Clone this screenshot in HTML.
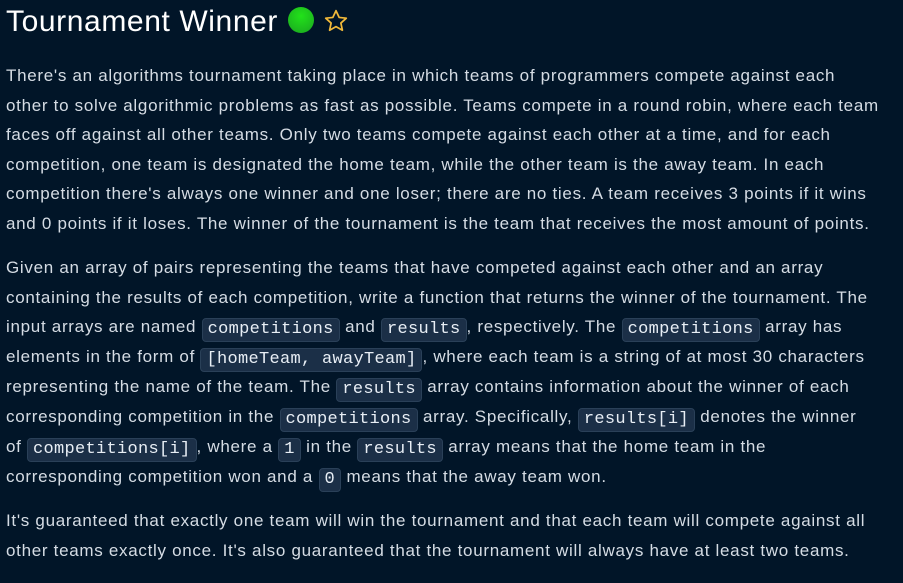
<!DOCTYPE html>
<html><head><meta charset="utf-8"><style>
html,body{margin:0;padding:0;background:#011528;width:903px;height:583px;overflow:hidden}
body{font-family:"Liberation Sans",sans-serif;color:#d5dce4}
h1{position:absolute;left:6px;top:5px;margin:0;font-weight:normal;font-size:30px;color:#fff;white-space:nowrap;letter-spacing:0.6px}
.dot{display:inline-block;width:26px;height:26px;border-radius:50%;background:radial-gradient(circle at 50% 35%,#22e21a,#1aa520);vertical-align:-2px;margin-left:10px}
.star{display:inline-block;vertical-align:-3px;margin-left:9px}
p{position:absolute;left:6px;margin:0;font-size:17px;line-height:29.6px;white-space:nowrap;letter-spacing:0.7px}
code{display:inline-block;line-height:22px;height:22px;vertical-align:-1px;font-family:"Liberation Mono",monospace;font-size:17px;background:#1b2f47;border:1px solid #2a4058;border-radius:4px;padding:0 5px;color:#e8eef5;letter-spacing:0.3px}
</style></head><body>
<h1>Tournament Winner<span class="dot"></span><svg class="star" width="26" height="26" viewBox="0 0 24 24"><path d="M12 2.5l2.9 6.2 6.6.7-5 4.5 1.4 6.6L12 17.2l-5.9 3.3 1.4-6.6-5-4.5 6.6-.7z" fill="none" stroke="#f1b93a" stroke-width="1.6" stroke-linejoin="round"/></svg></h1>
<p style="top:61px">There's an algorithms tournament taking place in which teams of programmers compete against each<br>other to solve algorithmic problems as fast as possible. Teams compete in a round robin, where each team<br>faces off against all other teams. Only two teams compete against each other at a time, and for each<br>competition, one team is designated the home team, while the other team is the away team. In each<br>competition there's always one winner and one loser; there are no ties. A team receives 3 points if it wins<br>and 0 points if it loses. The winner of the tournament is the team that receives the most amount of points.</p>
<p style="top:253px">Given an array of pairs representing the teams that have competed against each other and an array<br>containing the results of each competition, write a function that returns the winner of the tournament. The<br>input arrays are named <code>competitions</code> and <code>results</code>, respectively. The <code>competitions</code> array has<br>elements in the form of <code>[homeTeam, awayTeam]</code>, where each team is a string of at most 30 characters<br>representing the name of the team. The <code>results</code> array contains information about the winner of each<br>corresponding competition in the <code>competitions</code> array. Specifically, <code>results[i]</code> denotes the winner<br>of <code>competitions[i]</code>, where a <code>1</code> in the <code>results</code> array means that the home team in the<br>corresponding competition won and a <code>0</code> means that the away team won.</p>
<p style="top:506px">It's guaranteed that exactly one team will win the tournament and that each team will compete against all<br>other teams exactly once. It's also guaranteed that the tournament will always have at least two teams.</p>
</body></html>
